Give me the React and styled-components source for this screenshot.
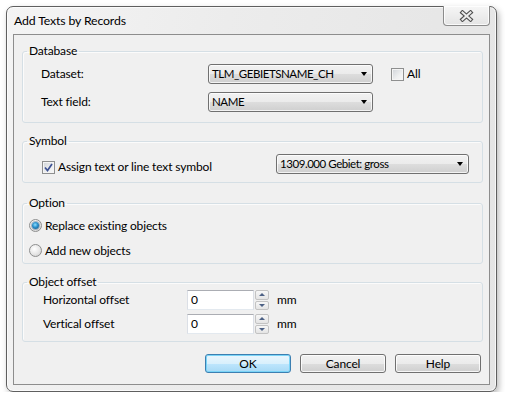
import React from "react";
import styled, { createGlobalStyle, css } from "styled-components";

const GlobalStyle = createGlobalStyle`
  html, body {
    margin: 0;
    padding: 0;
    background: #ffffff;
  }
  body {
    font-family: Lato, "Noto Sans", sans-serif;
    font-size: 12px;
    letter-spacing: -0.15px;
    color: #000;
  }
  * {
    box-sizing: border-box;
  }
`;

const Page = styled.div`
  padding: 6px 0 0 6px;
`;

const Window = styled.div`
  width: 491px;
  height: 386px;
  display: flex;
  flex-direction: column;
  padding: 0 6px 6px 6px;
  border: 1px solid #5f5f5f;
  border-radius: 7px;
  background: linear-gradient(100deg, #f4f4f4 0%, #ececec 40%, #e4e4e4 100%);
  box-shadow: 2px 3px 6px rgba(0, 0, 0, 0.28), inset 0 0 0 1px rgba(255, 255, 255, 0.7);
`;

const TitleBar = styled.div`
  height: 27px;
  display: flex;
  align-items: flex-start;
  justify-content: space-between;
`;

const Title = styled.div`
  align-self: center;
  padding-left: 1px;
  font-size: 12.3px;
  line-height: 16px;
  color: #000;
`;

const CloseButton = styled.div`
  width: 47px;
  height: 20px;
  margin-top: -1px;
  display: flex;
  align-items: center;
  justify-content: center;
  border: 1px solid #8c8c8c;
  border-top: none;
  border-radius: 0 0 4px 4px;
  background: linear-gradient(#f6f6f6, #e4e4e4);
  box-shadow: inset 0 0 0 1px rgba(255, 255, 255, 0.8);
`;

const Client = styled.div`
  flex: 1;
  display: flex;
  flex-direction: column;
  padding: 8px 6px 0 8px;
  border: 1px solid #8d8d8d;
  background: #f0f0f0;
`;

const Group = styled.fieldset`
  margin: ${(p) => p.$top || 0}px 0 0 0;
  padding: 0;
  min-width: 0;
  border: 1px solid #d5dfe5;
  border-radius: 3px;
  box-shadow: inset 1px 1px 0 #fbfbfb;
`;

const Legend = styled.legend`
  margin-left: 4px;
  padding: 0 2px;
  line-height: 16px;
  font-size: 12px;
  color: #000;
`;

const GroupBody = styled.div`
  display: flex;
  flex-direction: column;
  gap: ${(p) => p.$gap || 0}px;
  padding: ${(p) => p.$pad};
`;

const Row = styled.div`
  display: flex;
  align-items: center;
  height: ${(p) => p.$h || 20}px;
`;

const FieldLabel = styled.div`
  width: ${(p) => p.$w}px;
  flex-shrink: 0;
  line-height: 16px;
`;

const Combo = styled.div`
  width: ${(p) => p.$w}px;
  height: 20px;
  display: flex;
  align-items: center;
  justify-content: space-between;
  padding: 0 5px 0 3px;
  margin-left: ${(p) => p.$ml || 0}px;
  border: 1px solid #707070;
  border-radius: 3px;
  background: linear-gradient(#f2f2f2 0%, #ebebeb 50%, #dddddd 51%, #cfcfcf 100%);
  box-shadow: inset 0 0 0 1px rgba(255, 255, 255, 0.75);
  line-height: 16px;
`;

const ComboText = styled.span`
  font-size: 11.5px;
  letter-spacing: -0.45px;
`;

const Arrow = styled.span`
  width: 0;
  height: 0;
  border-left: 3.5px solid transparent;
  border-right: 3.5px solid transparent;
  border-top: 4px solid #000;
`;

const CheckWrap = styled.label`
  display: flex;
  align-items: center;
  gap: 3px;
  margin-left: ${(p) => p.$ml || 0}px;
  margin-top: ${(p) => p.$mt || 0}px;
  line-height: 16px;
`;

const CheckBox = styled.span`
  width: 13px;
  height: 13px;
  flex-shrink: 0;
  display: flex;
  align-items: center;
  justify-content: center;
  border: 1px solid #8e8f8f;
  background: linear-gradient(135deg, #cfd3d8 0%, #eeeff0 60%, #f8f8f8 100%);
  box-shadow: inset 0 0 0 1px #f4f4f4;
`;

const RadioRow = styled.label`
  display: flex;
  align-items: center;
  gap: 3px;
  height: 13px;
  line-height: 16px;
`;

const Radio = styled.span`
  width: 13px;
  height: 13px;
  flex-shrink: 0;
  display: flex;
  align-items: center;
  justify-content: center;
  border: 1px solid #8e8f8f;
  border-radius: 50%;
  background: radial-gradient(circle at 40% 35%, #ffffff 0%, #e6e6e6 55%, #c9c9c9 100%);

  ${(p) =>
    p.$checked &&
    css`
      &::after {
        content: "";
        width: 7px;
        height: 7px;
        border-radius: 50%;
        background: radial-gradient(circle at 45% 40%, #8fe0ff 0%, #2a8fcb 45%, #0d4a78 100%);
        box-shadow: 0 0 0 1px rgba(30, 70, 110, 0.35);
      }
    `}
`;

const TextBox = styled.div`
  width: 67px;
  height: 20px;
  padding: 1px 3px;
  background: #fff;
  border: 1px solid #e3e9ef;
  border-top-color: #abadb3;
  border-left-color: #dbdfe6;
  border-right-color: #dbdfe6;
  line-height: 16px;
`;

const Spinner = styled.div`
  width: 14px;
  height: 20px;
  margin-left: 1px;
  display: flex;
  flex-direction: column;
  gap: 1px;
`;

const SpinPart = styled.div`
  flex: 1;
  display: flex;
  align-items: center;
  justify-content: center;
  border: 1px solid #c3c3c3;
  border-radius: 2px;
  background: linear-gradient(#f7f7f7, #e4e4e4);
`;

const SpinArrow = styled.span`
  width: 0;
  height: 0;
  border-left: 3px solid transparent;
  border-right: 3px solid transparent;
  ${(p) =>
    p.$up
      ? css`
          border-bottom: 3px solid #4d6185;
        `
      : css`
          border-top: 3px solid #4d6185;
        `}
`;

const Unit = styled.span`
  margin-left: 8px;
  line-height: 16px;
`;

const ButtonBar = styled.div`
  display: flex;
  justify-content: flex-end;
  gap: 9px;
  margin-top: 12px;
  padding-right: 2px;
`;

const Button = styled.button`
  width: 86px;
  height: 19px;
  padding: 0;
  font: inherit;
  letter-spacing: inherit;
  line-height: 15px;
  color: #000;
  border: 1px solid #707070;
  border-radius: 3px;
  background: linear-gradient(#f2f2f2 0%, #ebebeb 50%, #dddddd 51%, #cfcfcf 100%);
  box-shadow: inset 0 0 0 1px rgba(255, 255, 255, 0.8);

  ${(p) =>
    p.$default &&
    css`
      border-color: #3c7fb1;
      background: linear-gradient(#eaf6fd 0%, #d9f0fc 50%, #bee6fd 51%, #a7d9f5 100%);
      box-shadow: inset 0 0 0 1px #7ad4f7;
    `}
`;

const CloseGlyph = () => (
  <svg width="15" height="12" viewBox="0 0 15 12">
    <path d="M3.5 2.5 L11.5 9.5 M11.5 2.5 L3.5 9.5" stroke="#4f4f4f" strokeWidth="4.2" strokeLinecap="square" fill="none" />
    <path d="M3.5 2.5 L11.5 9.5 M11.5 2.5 L3.5 9.5" stroke="#ececec" strokeWidth="2" strokeLinecap="square" fill="none" />
  </svg>
);

const CheckMark = () => (
  <svg width="9" height="9" viewBox="0 0 9 9">
    <path d="M1 4.5 L3.5 7.5 L8 1" stroke="#3e5293" strokeWidth="1.7" fill="none" />
  </svg>
);

const Check = ({ checked }) => <CheckBox>{checked && <CheckMark />}</CheckBox>;

const OffsetRow = ({ label }) => (
  <Row>
    <FieldLabel $w={144}>{label}</FieldLabel>
    <TextBox>0</TextBox>
    <Spinner>
      <SpinPart>
        <SpinArrow $up />
      </SpinPart>
      <SpinPart>
        <SpinArrow />
      </SpinPart>
    </Spinner>
    <Unit>mm</Unit>
  </Row>
);

export default function App() {
  return (
    <Page>
      <GlobalStyle />
      <Window>
        <TitleBar>
          <Title>Add Texts by Records</Title>
          <CloseButton>
            <CloseGlyph />
          </CloseButton>
        </TitleBar>
        <Client>
          <Group>
            <Legend>Database</Legend>
            <GroupBody $gap={8} $pad="5px 0 10px 18px">
              <Row>
                <FieldLabel $w={167}>Dataset:</FieldLabel>
                <Combo $w={165}>
                  <ComboText>TLM_GEBIETSNAME_CH</ComboText>
                  <Arrow />
                </Combo>
                <CheckWrap $ml={18}>
                  <Check />
                  All
                </CheckWrap>
              </Row>
              <Row>
                <FieldLabel $w={167}>Text field:</FieldLabel>
                <Combo $w={165}>
                  <ComboText>NAME</ComboText>
                  <Arrow />
                </Combo>
              </Row>
            </GroupBody>
          </Group>

          <Group $top={10}>
            <Legend>Symbol</Legend>
            <GroupBody $pad="5px 13px 8px 19px">
              <Row>
                <CheckWrap $mt={6}>
                  <Check checked />
                  Assign text or line text symbol
                </CheckWrap>
                <Combo $w={193} style={{ marginLeft: "auto" }}>
                  <ComboText>1309.000 Gebiet: gross</ComboText>
                  <Arrow />
                </Combo>
              </Row>
            </GroupBody>
          </Group>

          <Group $top={12}>
            <Legend>Option</Legend>
            <GroupBody $gap={12} $pad="8px 0 6px 6px">
              <RadioRow>
                <Radio $checked />
                Replace existing objects
              </RadioRow>
              <RadioRow>
                <Radio />
                Add new objects
              </RadioRow>
            </GroupBody>
          </Group>

          <Group $top={10}>
            <Legend>Object offset</Legend>
            <GroupBody $gap={4} $pad="0 0 7px 20px">
              <OffsetRow label="Horizontal offset" />
              <OffsetRow label="Vertical offset" />
            </GroupBody>
          </Group>

          <ButtonBar>
            <Button $default>OK</Button>
            <Button>Cancel</Button>
            <Button>Help</Button>
          </ButtonBar>
        </Client>
      </Window>
    </Page>
  );
}
